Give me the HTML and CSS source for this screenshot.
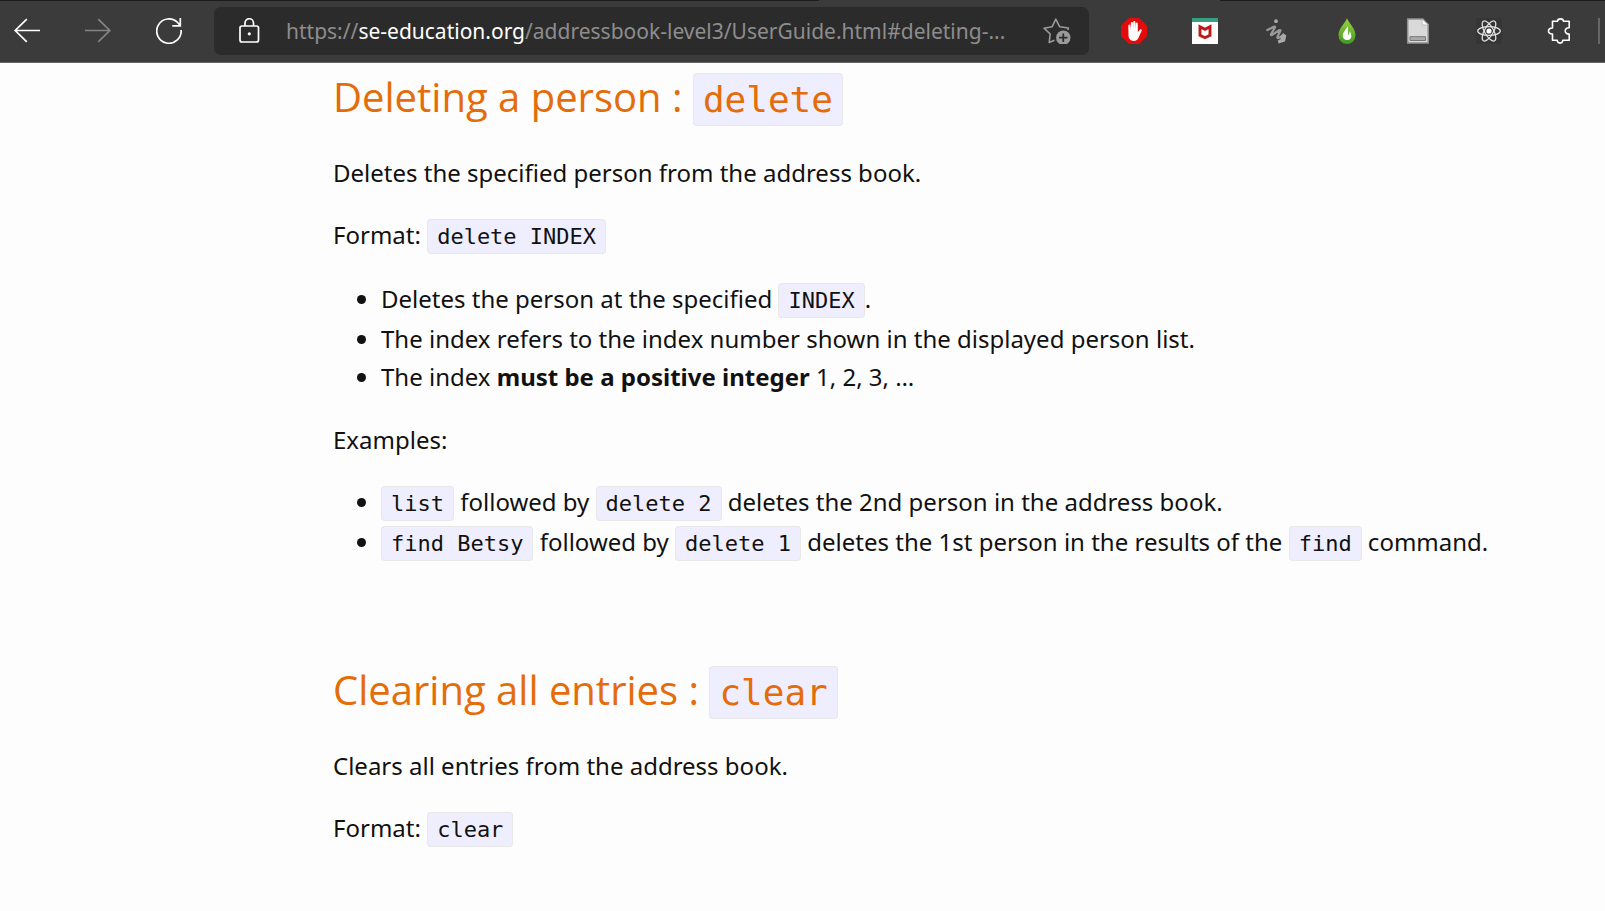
FILE: index.html
```html
<!DOCTYPE html>
<html lang="en">
<head>
<meta charset="utf-8">
<title>User Guide - AddressBook Level 3</title>
<link rel="stylesheet" href="styles.css">
</head>
<body>
<header class="toolbar">
  <nav class="nav-buttons" aria-label="Navigation">
    <button class="tool" type="button" aria-label="Back"><svg viewBox="0 0 26 26" fill="none" stroke="#fff" stroke-width="1.7"><path d="M26 12.500H1.200M12.800 1.200L1.200 12.500l11.600 11.300"/></svg></button>
    <button class="tool" type="button" aria-label="Forward"><svg viewBox="0 0 26 26" fill="none" stroke="#858585" stroke-width="1.700"><path d="M0 12.500h24.800M13.200 1.200l11.600 11.300-11.600 11.300"/></svg></button>
    <button class="tool" type="button" aria-label="Refresh"><svg viewBox="0 0 26 26" fill="none" stroke="#fff" stroke-width="1.700"><path d="M25.100 12A12.200 12.200 0 1 1 21.800 4.700L24.300 7.600M24.300 0v7.800h-8"/></svg></button>
  </nav>
  <div class="address">
    <button class="tool" type="button" aria-label="View site information"><svg viewBox="0 0 26 26" fill="none" stroke="#fff" stroke-width="1.700"><rect x="4" y="8" width="18.500" height="16" rx="2"/><path d="M9 8V5a4.200 4.200 0 0 1 8.500 0v3"/><circle cx="13.300" cy="15.800" r="1.600" fill="#fff" stroke="none"/></svg></button>
    <div class="url" role="textbox" contenteditable="true" spellcheck="false" aria-label="Address bar">https://<span class="host">se-education.org</span>/addressbook-level3/UserGuide.html#deleting-...</div>
    <button class="tool star" type="button" aria-label="Add this page to favorites"><svg viewBox="0 0 28 26" fill="none" stroke="#9a9a9a" stroke-width="1.600" stroke-linejoin="round"><path d="M11.500 22.200l-5.300 2.300 1-8.500L1 10.200l8.200-1.500L12.800 1.200l3.800 7.500 8.800 1.300-.6 2"/><circle cx="20.300" cy="19.700" r="7.200" fill="#9a9a9a" stroke="none"/><path stroke="#2b2b2b" stroke-width="1.700" d="M20.300 15.500v8.400M16.100 19.700h8.400"/></svg></button>
  </div>
  <div class="extensions">
    <button class="tool" type="button" aria-label="Ad blocker"><svg viewBox="0 0 26 26"><path fill="#e30b0b" d="M7.800 0h10.400L26 7.800v10.400L18.200 26H7.800L0 18.200V7.800z"/><path fill="#fff" d="M7.300 8c0-2 2.100-2 2.100 0l.4 4V5.500c0-2 2.200-2 2.200 0l.2 6V4.500c0-2 2.200-2 2.200 0v7l.3-5.500c.1-2 2.200-2 2.100 0v8.200l1.700-2.300c1-1.200 2.800-.4 2.200.9l-3.300 7.100c-1.200 2.300-2.500 3-4.600 3-3.500 0-5.300-2.400-5.300-5.700z"/></svg></button>
    <button class="tool" type="button" aria-label="Web protection"><svg viewBox="0 0 26 26"><path fill="#fff" d="M0 0h26v26H0z"/><path fill="#36a080" d="M0 0h26v4H0z"/><path fill="none" stroke="#c01818" stroke-width="2.900" d="M8 8.700l5 2.600 5-2.600v8.600L13 19.700l-5-2.400z"/></svg></button>
    <button class="tool" type="button" aria-label="Scribble"><svg viewBox="0 0 26 26"><circle cx="13" cy="3.200" r="1.900" fill="#aaa"/><path fill="none" stroke="#999" stroke-width="2.200" stroke-linecap="round" stroke-linejoin="round" d="M4.300 12l6.500-3.200c1.600-.6 1.500.3.800 1.400l-3.400 5.600c-.7 1.400 0 1.500 1 .9l7-4.400c1.300-.7 1.600-.1 1 1l-2.700 5.500c-.6 1.500.5 1.500 1.500 1l3-2"/><path fill="#aaa" d="M20 15l3.300 2.500-1.300 6-6.500 2-.7-3 3-1.500-.8-2z"/></svg></button>
    <button class="tool" type="button" aria-label="Green drop"><svg viewBox="0 0 26 26"><defs><linearGradient id="leaf" x1="0" y1="0" x2="0" y2="1"><stop stop-color="#9ad442"/><stop offset="1" stop-color="#439821"/></linearGradient></defs><path fill="url(#leaf)" d="M13 0c1 4.500 8.500 9.800 8.500 17.200A8.500 8.700 0 0 1 13 26a8.500 8.700 0 0 1-8.500-8.800C4.500 9.800 12 4.500 13 0z"/><path fill="#fff" d="M13.500 8c-.6 3-5 6.200-4.800 9.700.1 2.800 2 4.300 4.500 4.300 3 0 4.300-2 4.100-4.600-.1-1.800-1.100-3.100-1.300-4.500-1 1.400-.2 3.100-1.500 4-1.200-2 .2-6-1-8.900z"/></svg></button>
    <button class="tool" type="button" aria-label="Page notes"><svg viewBox="0 0 26 26"><path fill="#d9d9d9" stroke="#919191" stroke-width="1.500" d="M2.700 1h15l5.500 5.500V25H2.700z"/><path fill="#fff" stroke="#aaa" stroke-width=".7" d="M17.200 1v6h6z"/><path fill="#aaa" stroke="#777" d="M5 18.700h15.500v3.800H5z"/></svg></button>
    <button class="tool" type="button" aria-label="React Developer Tools"><svg viewBox="0 0 26 26"><path fill="#353535" d="M0 0h26v26H0z"/><circle cx="13" cy="13" r="2.600" fill="#fff"/><g fill="none" stroke="#e4e4e4" stroke-width="1.200"><ellipse cx="13" cy="13" rx="11.300" ry="4.400"/><ellipse cx="13" cy="13" rx="11.300" ry="4.400" transform="rotate(60 13 13)"/><ellipse cx="13" cy="13" rx="11.300" ry="4.400" transform="rotate(120 13 13)"/></g></svg></button>
    <button class="tool" type="button" aria-label="Extensions"><svg viewBox="0 0 26 26" fill="none" stroke="#fff" stroke-width="1.600" stroke-linejoin="round"><path d="M5.500 3.300h5c.2-3.200 5.700-3.200 6 0h5.700v6.500c-5.300-.4-5.300 6.500 0 6.300v6.200h-6.400c-.2 3.700-5.300 3.700-5.600 0H5.500V16C.1 16.300.1 9.700 5.500 10z"/></svg></button>
  </div>
  <div class="divider"></div>
</header>
<main class="guide">
  <section class="feature">
    <h3>Deleting a person : <code>delete</code></h3>
    <p>Deletes the specified person from the address book.</p>
    <p>Format: <code>delete INDEX</code></p>
    <ul>
      <li>Deletes the person at the specified <code>INDEX</code>.</li>
      <li>The index refers to the index number shown in the displayed person list.</li>
      <li>The index <strong>must be a positive integer</strong> 1, 2, 3, …</li>
    </ul>
    <p>Examples:</p>
    <ul>
      <li><code>list</code> followed by <code>delete 2</code> deletes the 2nd person in the address book.</li>
      <li><code>find Betsy</code> followed by <code>delete 1</code> deletes the 1st person in the results of the <code>find</code> command.</li>
    </ul>
  </section>
  <section class="feature">
    <h3>Clearing all entries : <code>clear</code></h3>
    <p>Clears all entries from the address book.</p>
    <p>Format: <code>clear</code></p>
  </section>
</main>
</body>
</html>
```
FILE: styles.css
```css
* {
  box-sizing: border-box;
}

body {
  margin: 0;
  background: #fdfdfd;
  color: #111;
  font-family: "Segoe UI", "Noto Sans", sans-serif;
  font-size: 24px;
  line-height: 38px;
}

.toolbar {
  display: flex;
  align-items: center;
  height: 63px;
  padding: 0 5px 0 14px;
  background: linear-gradient(90deg, #1c1c1c 51%, #3b3b3b 51% 76%, #1c1c1c 76%) top / 100% 1px no-repeat #3b3b3b;
  border-bottom: 1px solid #666;
}

.nav-buttons,
.extensions {
  display: flex;
  gap: 45px;
}

.tool {
  flex: none;
  width: 26px;
  height: 26px;
  padding: 0;
  border: 0;
  background: none;
}

.tool svg {
  display: block;
  width: 100%;
  height: 100%;
}

.tool.star {
  width: 28px;
}

.address {
  display: flex;
  flex: 1;
  align-items: center;
  min-width: 0;
  height: 48px;
  margin: 0 32px;
  padding: 0 18px 0 22px;
  border-radius: 7px;
  background: #2b2b2b;
}

.url {
  flex: 1;
  min-width: 0;
  margin: 0 16px 0 24px;
  overflow: hidden;
  color: #8d8d8d;
  font-size: 21px;
  white-space: nowrap;
}

.host {
  color: #fff;
}

.divider {
  width: 2px;
  height: 26px;
  margin-left: 25px;
  background: #666;
}

.guide {
  padding: 6px 32px 32px 333px;
}

h3 {
  margin: 0 0 26px;
  color: #e46c0a;
  font-family: "Segoe UI", "Open Sans", sans-serif;
  font-size: 40px;
  font-weight: 400;
  line-height: 56px;
}

p {
  margin: 0 0 24px;
}

ul {
  margin: 0 0 25px;
  padding-left: 48px;
}

code {
  padding: 4px 9px;
  border: 1px solid #e8e8e8;
  border-radius: 4px;
  background: #eeeeff;
  font-family: Consolas, "DejaVu Sans Mono", monospace;
  font-size: 22px;
}

h3 code {
  padding: 5px 9px;
  font-size: 36px;
}

.feature + .feature {
  margin-top: 99px;
}
```
